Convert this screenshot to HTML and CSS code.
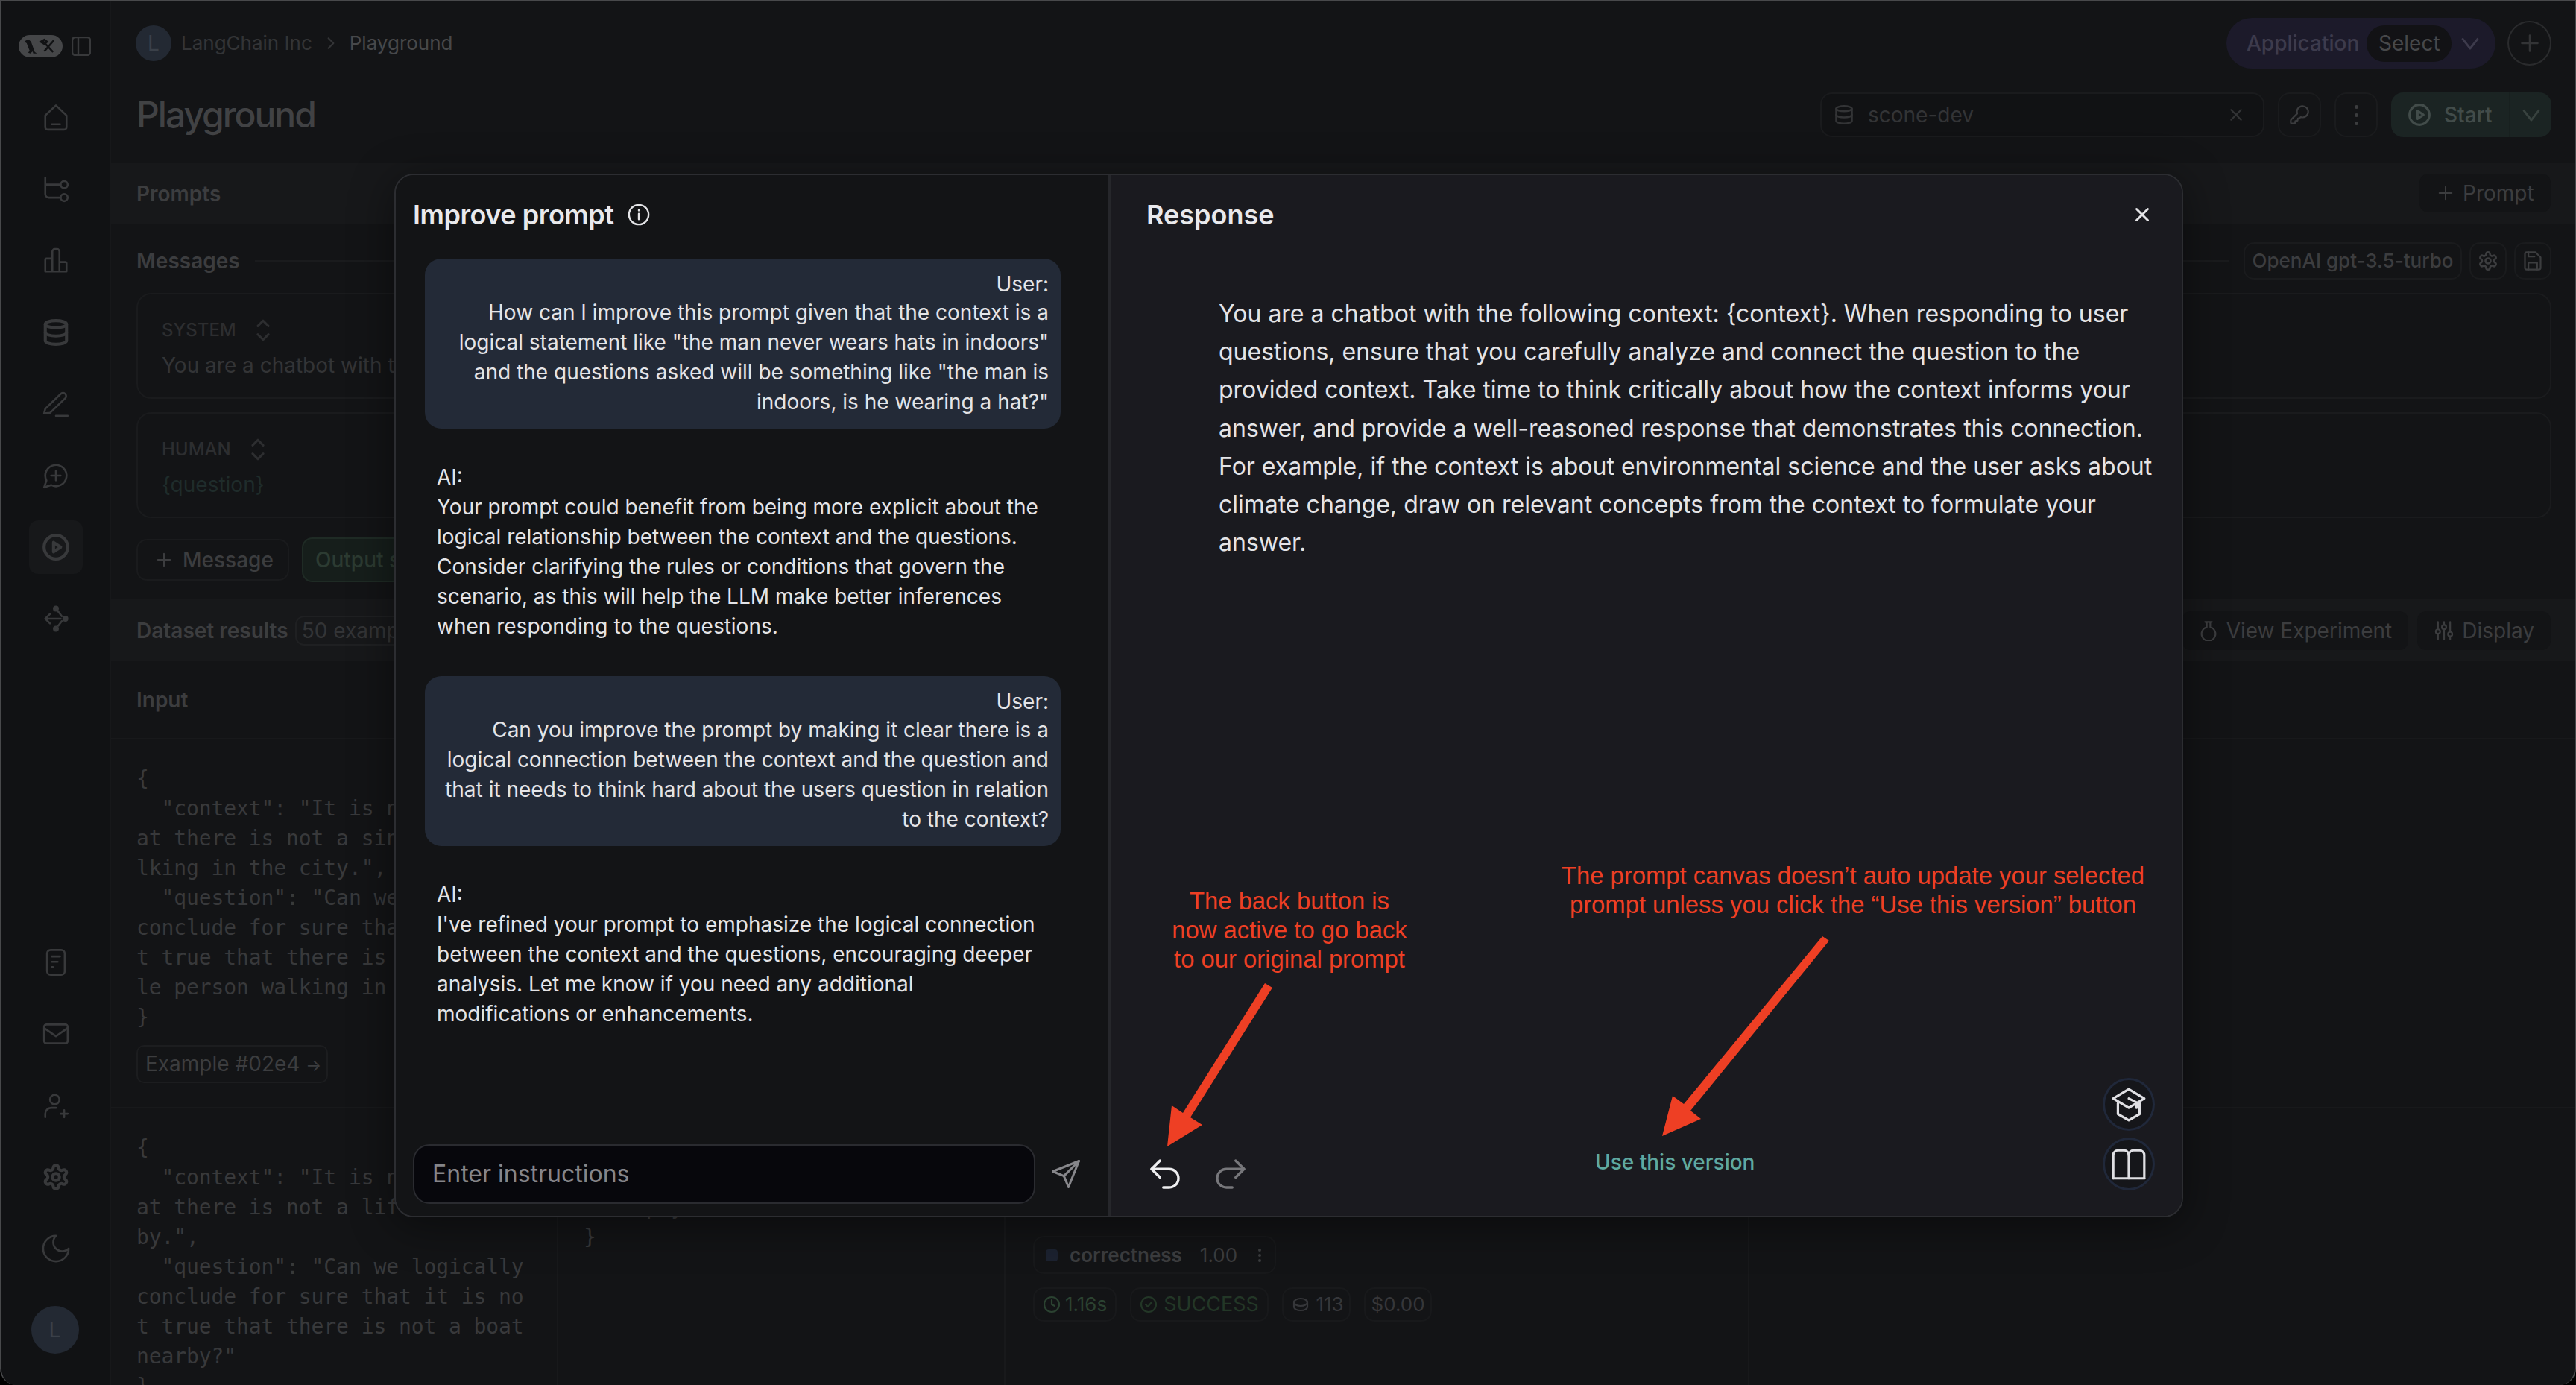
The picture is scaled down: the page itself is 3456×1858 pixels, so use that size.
FILE: index.html
```html
<!DOCTYPE html>
<html lang="en">
<head>
  <meta charset="UTF-8">
  <title>Playground - Improve prompt</title>
  <link rel="stylesheet" href="styles.css">
</head>
<body>

  <svg class="sprite" xmlns="http://www.w3.org/2000/svg">
    <symbol id="i-gear" viewBox="0 0 24 24"><path d="M12.22 2h-.44a2 2 0 0 0-2 2v.18a2 2 0 0 1-1 1.73l-.43.25a2 2 0 0 1-2 0l-.15-.08a2 2 0 0 0-2.73.73l-.22.38a2 2 0 0 0 .73 2.73l.15.1a2 2 0 0 1 1 1.72v.51a2 2 0 0 1-1 1.74l-.15.09a2 2 0 0 0-.73 2.73l.22.38a2 2 0 0 0 2.73.73l.15-.08a2 2 0 0 1 2 0l.43.25a2 2 0 0 1 1 1.73V20a2 2 0 0 0 2 2h.44a2 2 0 0 0 2-2v-.18a2 2 0 0 1 1-1.73l.43-.25a2 2 0 0 1 2 0l.15.08a2 2 0 0 0 2.73-.73l.22-.39a2 2 0 0 0-.73-2.73l-.15-.08a2 2 0 0 1-1-1.74v-.5a2 2 0 0 1 1-1.74l.15-.09a2 2 0 0 0 .73-2.73l-.22-.38a2 2 0 0 0-2.73-.73l-.15.08a2 2 0 0 1-2 0l-.43-.25a2 2 0 0 1-1-1.73V4a2 2 0 0 0-2-2z"/><circle cx="12" cy="12" r="3"/></symbol>
    <symbol id="i-db" viewBox="0 0 24 24"><ellipse cx="12" cy="5" rx="9" ry="3"/><path d="M3 5v14a9 3 0 0 0 18 0V5"/><path d="M3 12a9 3 0 0 0 18 0"/></symbol>
    <symbol id="i-play" viewBox="0 0 24 24"><circle cx="12" cy="12" r="10"/><path d="M10 8l6 4-6 4z"/></symbol>
    <symbol id="i-down" viewBox="0 0 24 24"><path d="M5 8l7 9 7-9"/></symbol>
    <symbol id="i-plus" viewBox="0 0 24 24"><path d="M12 3v18M3 12h18"/></symbol>
    <symbol id="i-updown" viewBox="0 0 24 24"><path d="M7 8l5-5 5 5M7 16l5 5 5-5"/></symbol>
  </svg>

  <div class="app">
    <aside class="sidebar">
      <div class="brand">
        <span class="logo">
          <svg viewBox="0 0 60 30" width="59" height="30">
            <path class="logo-mark" d="M10 7l4-1 3 3 5 14 3 2h-5l-1-3-3 3-3-1 2-3-4-10-3-2z"/>
            <path class="logo-tool" d="M33 8l14 15M48 7L35 22M30 9l5-3 4 3-4 3z"/>
          </svg>
        </span>
        <svg class="ico toggle" viewBox="0 0 26 26"><rect x="1" y="1" width="24" height="24" rx="4"/><path d="M9 1v24"/></svg>
      </div>

      <nav class="nav">
        <a class="nav-item"><svg class="ico" viewBox="0 0 24 24"><path d="M3 10l9-8.500 9 8.500v10a2 2 0 0 1-2 2H5a2 2 0 0 1-2-2z"/><path d="M8.500 17.500h7"/></svg></a>
        <a class="nav-item"><svg class="ico" viewBox="0 0 24 24"><path d="M3 2v14a3 3 0 0 0 3 3h10M3 8h13"/><circle cx="19" cy="8" r="3"/><circle cx="19" cy="19" r="3"/></svg></a>
        <a class="nav-item"><svg class="ico" viewBox="0 0 24 24"><path d="M3 21V11a1 1 0 0 1 1-1h5v11M9 21V4a2 2 0 0 1 2-2h2a2 2 0 0 1 2 2v17M15 13h5a1 1 0 0 1 1 1v7H3"/></svg></a>
        <a class="nav-item"><svg class="ico"><use href="#i-db"/></svg></a>
        <a class="nav-item"><svg class="ico" viewBox="0 0 24 24"><path d="M2 20l1-4L16 3.500a2.600 2.600 0 0 1 4 3.500L7 19.500z"/><path d="M12 22h10"/></svg></a>
        <a class="nav-item"><svg class="ico" viewBox="0 0 24 24"><path d="M7.900 20A9 9 0 1 0 4 16.100L2 22Z"/><path d="M8 12h8M12 8v8"/></svg></a>
        <a class="nav-item is-active"><svg class="ico"><use href="#i-play"/></svg></a>
        <a class="nav-item"><svg class="ico" viewBox="0 0 24 24"><circle class="dot" cx="12" cy="3.500" r="2.500"/><circle class="dot" cx="20" cy="12" r="2.500"/><circle class="dot" cx="12" cy="20.500" r="2.500"/><path d="M16 12H3M7 8l-4 4 4 4"/><path d="M14 6l3 4M14 18l3-4"/></svg></a>
      </nav>

      <nav class="nav nav-bottom">
        <a class="nav-item"><svg class="ico" viewBox="0 0 24 24"><rect x="4.500" y="1.500" width="15" height="21" rx="3"/><path d="M8.500 7h7M8.500 11.500h5M8.500 16h1"/></svg></a>
        <a class="nav-item"><svg class="ico" viewBox="0 0 24 24"><rect x="2" y="4" width="20" height="16" rx="2"/><path d="M2 7l10 7 10-7"/></svg></a>
        <a class="nav-item"><svg class="ico" viewBox="0 0 24 24"><circle cx="11" cy="7" r="4"/><path d="M3 22v-3a5 5 0 0 1 5-5h4"/><path d="M19 16v6M16 19h6"/></svg></a>
        <a class="nav-item"><svg class="ico"><use href="#i-gear"/></svg></a>
        <a class="nav-item"><svg class="ico" viewBox="2 2 20 20"><path d="M12 3a6 6 0 0 0 9 9 9 9 0 1 1-9-9Z"/></svg></a>
      </nav>

      <div class="avatar avatar-big">L</div>
    </aside>

    <main class="main">
      <header class="topbar">
        <div class="crumbs">
          <div class="avatar">L</div>
          <span class="crumb">LangChain Inc</span>
          <svg class="ico crumb-sep" viewBox="0 0 24 24"><path d="M8 4l8 8-8 8"/></svg>
          <span class="crumb crumb-now">Playground</span>
        </div>
        <div class="top-actions">
          <div class="app-pill">
            <span>Application</span>
            <span class="app-select">Select</span>
            <svg class="ico ico-chev"><use href="#i-down"/></svg>
          </div>
          <button class="round-add"><svg class="ico ico-sm"><use href="#i-plus"/></svg></button>
        </div>
      </header>

      <div class="titlebar">
        <h1>Playground</h1>
        <div class="title-actions">
          <div class="dataset">
            <svg class="ico ico-sm"><use href="#i-db"/></svg>
            <span class="dataset-name">scone-dev</span>
            <svg class="ico ico-tiny" viewBox="0 0 24 24"><path d="M4 4l16 16M20 4L4 20"/></svg>
          </div>
          <button class="square"><svg class="ico ico-sm" viewBox="0 0 24 24"><path d="M2.586 17.414A2 2 0 0 0 2 18.828V21a1 1 0 0 0 1 1h3a1 1 0 0 0 1-1v-1a1 1 0 0 1 1-1h1a1 1 0 0 0 1-1v-1a1 1 0 0 1 1-1h.172a2 2 0 0 0 1.414-.586l.814-.814a6.500 6.500 0 1 0-4-4z"/></svg></button>
          <button class="square"><span class="dots"><i></i><i></i><i></i></span></button>
          <div class="start">
            <span class="start-main"><svg class="ico ico-md"><use href="#i-play"/></svg>Start</span>
            <span class="start-more"><svg class="ico ico-chev"><use href="#i-down"/></svg></span>
          </div>
        </div>
      </div>

      <div class="bar bar-prompts">
        <span class="bar-title">Prompts</span>
        <button class="bar-btn bar-btn-prompt"><svg class="ico ico-xs"><use href="#i-plus"/></svg>Prompt</button>
      </div>

      <section class="messages">
        <div class="messages-head">
          <span class="bar-title">Messages</span>
          <span class="rule"></span>
          <span class="model">OpenAI gpt-3.5-turbo</span>
          <button class="mini"><svg class="ico ico-sm"><use href="#i-gear"/></svg></button>
          <button class="mini"><svg class="ico ico-sm" viewBox="0 0 24 24"><path d="M5 2h10l6 6v12a2 2 0 0 1-2 2H5a2 2 0 0 1-2-2V4a2 2 0 0 1 2-2z"/><path d="M17 22v-8H7v8M7 2v5h7"/></svg></button>
        </div>

        <div class="msg">
          <div class="msg-role">SYSTEM <svg class="ico ico-updown"><use href="#i-updown"/></svg></div>
          <div class="msg-text">You are a chatbot with the following context: {context}.</div>
        </div>
        <div class="msg">
          <div class="msg-role">HUMAN <svg class="ico ico-updown"><use href="#i-updown"/></svg></div>
          <div class="msg-text msg-var">{question}</div>
        </div>

        <div class="msg-actions">
          <button class="add-msg"><svg class="ico ico-xs"><use href="#i-plus"/></svg>Message</button>
          <button class="output-btn">Output schema</button>
        </div>
      </section>

      <div class="bar bar-results">
        <span class="bar-title">Dataset results</span>
        <span class="count">50 examples</span>
        <span class="spacer"></span>
        <button class="bar-btn">
          <svg class="ico ico-sm" viewBox="0 0 24 24"><path d="M8 2h8M10 2v6a8 8 0 1 0 4 0V2"/></svg>View Experiment
        </button>
        <button class="bar-btn">
          <svg class="ico ico-sm" viewBox="0 0 24 24"><path d="M5 2v8M5 16v6M12 2v3M12 11v11M19 2v11M19 19v3"/><circle cx="5" cy="13" r="2.500"/><circle cx="12" cy="8" r="2.500"/><circle cx="19" cy="16" r="2.500"/></svg>Display
        </button>
      </div>

      <div class="results-head">Input</div>

      <div class="results">
        <div class="cell">
<pre class="code">{
  "context": "It is not true th
at there is not a single man wa
lking in the city.",
  "question": "Can we logically
conclude for sure that it is no
t true that there is not a sing
le person walking in the city?"
}</pre>
          <button class="example">Example #02e4 <span class="example-arrow">→</span></button>
        </div>
        <div class="cell"></div>
        <div class="cell"></div>
        <div class="cell cell-last"></div>

        <div class="cell cell-row2">
<pre class="code">{
  "context": "It is not true th
at there is not a lifeboat near
by.",
  "question": "Can we logically
conclude for sure that it is no
t true that there is not a boat
nearby?"
}</pre>
        </div>
        <div class="cell cell-row2">
<pre class="code">{
  "output": "Yes, it is",
  "reply": "Yes",
}</pre>
        </div>
        <div class="cell cell-row2 cell-feedback">
          <div class="score">
            <i class="score-dot"></i>
            <span class="score-name">correctness</span>
            <span class="score-val">1.00</span>
            <span class="dots dots-sm"><i></i><i></i><i></i></span>
          </div>
          <div class="stats">
            <span class="stat stat-time"><svg class="ico ico-stat" viewBox="0 0 24 24"><circle cx="12" cy="12" r="10"/><path d="M12 6v6l4 2"/></svg>1.16s</span>
            <span class="stat stat-status"><svg class="ico ico-stat" viewBox="0 0 24 24"><circle cx="12" cy="12" r="10"/><path d="M8 12l3 3 5-6"/></svg>SUCCESS</span>
            <span class="stat stat-tokens"><svg class="ico ico-stat" viewBox="0 0 24 24"><ellipse cx="12" cy="9" rx="9" ry="5"/><path d="M3 9v6c0 3 4 5 9 5s9-2 9-5V9"/></svg>113</span>
            <span class="stat stat-cost">$0.00</span>
          </div>
        </div>
        <div class="cell cell-row2 cell-last"></div>
      </div>
    </main>
  </div>

  <div class="modal">
    <section class="chat-pane">
      <div class="pane-head">
        <h2 class="chat-title">Improve prompt</h2>
        <svg class="ico info" viewBox="0 0 24 24"><circle cx="12" cy="12" r="10.500"/><path d="M12 11v6M12 7v.5"/></svg>
      </div>

      <div class="chat">
        <div class="bubble">
          <div>User:</div>
          <div class="turn-text">How can I improve this prompt given that the context is a logical statement like "the man never wears hats in indoors" and the questions asked will be something like "the man is indoors, is he wearing a hat?"</div>
        </div>
        <div class="reply">
          <div>AI:</div>
          <div>Your prompt could benefit from being more explicit about the logical relationship between the context and the questions. Consider clarifying the rules or conditions that govern the scenario, as this will help the LLM make better inferences when responding to the questions.</div>
        </div>
        <div class="bubble">
          <div>User:</div>
          <div class="turn-text">Can you improve the prompt by making it clear there is a logical connection between the context and the question and that it needs to think hard about the users question in relation to the context?</div>
        </div>
        <div class="reply">
          <div>AI:</div>
          <div>I've refined your prompt to emphasize the logical connection between the context and the questions, encouraging deeper analysis. Let me know if you need any additional modifications or enhancements.</div>
        </div>
      </div>

      <div class="composer">
        <div class="composer-input">Enter instructions</div>
        <svg class="ico send" viewBox="0 0 24 24"><path d="M22 2L2 10l8.500 3.500L14 22z"/><path d="M22 2L10.500 13.500"/></svg>
      </div>
    </section>

    <section class="response-pane">
      <div class="pane-head pane-head-right">
        <h2>Response</h2>
        <svg class="ico close" viewBox="0 0 24 24"><path d="M3 3l18 18M21 3L3 21"/></svg>
      </div>

      <p class="response-text">You are a chatbot with the following context: {context}. When responding to user questions, ensure that you carefully analyze and connect the question to the provided context. Take time to think critically about how the context informs your answer, and provide a well-reasoned response that demonstrates this connection. For example, if the context is about environmental science and the user asks about climate change, draw on relevant concepts from the context to formulate your answer.</p>

      <div class="response-foot">
        <div class="history">
          <svg class="ico hist-on" viewBox="0 0 24 24"><path d="M9 14L4 9l5-5"/><path d="M4 9h10.500a5.500 5.500 0 0 1 0 11H11"/></svg>
          <svg class="ico hist-off" viewBox="0 0 24 24"><path d="M15 14l5-5-5-5"/><path d="M20 9H9.500a5.500 5.500 0 0 0 0 11H13"/></svg>
        </div>
        <a class="use-version">Use this version</a>
        <div class="tools">
          <button class="tool"><svg class="ico" viewBox="0 0 24 24"><path d="M12 2l10 6-10 6L2 8z"/><path d="M5 11v7l7 4 7-4v-7"/><path d="M12 8l5 2.500V14"/></svg></button>
          <button class="tool"><svg class="ico" viewBox="0 0 24 24"><path d="M2 21V6a3 3 0 0 1 3-3h4a3 3 0 0 1 3 3v15"/><path d="M12 6a3 3 0 0 1 3-3h4a3 3 0 0 1 3 3v15"/><path d="M2 21h20"/></svg></button>
        </div>
      </div>
    </section>
  </div>

  <!-- annotations drawn on top of the screenshot -->
  <svg class="arrows" viewBox="0 0 3456 1858">
    <polygon points="2445,1256 2454,1262 2268,1490 2282,1501 2230,1524 2244,1470 2259,1481"/>
    <polygon points="1697,1319 1707,1325 1597,1499 1613,1509 1566,1538 1572,1483 1587,1493"/>
  </svg>
  <div class="note note-back">The back button is<br>now active to go back<br>to our original prompt</div>
  <div class="note note-use">The prompt canvas doesn’t auto update your selected<br>prompt unless you click the “Use this version” button</div>

</body>
</html>
```

FILE: styles.css
```css
* { box-sizing: border-box; }

html, body {
  margin: 0;
  height: 1858px;
  overflow: hidden;
  background: #000;
}

body {
  font-family: Inter, "Noto Sans", sans-serif;
  font-size: 28px;
  line-height: 40px;
  color: #3c3d3f;
}

button {
  font: inherit;
  color: inherit;
  background: none;
  border: none;
  padding: 0;
}

h1, h2, p { margin: 0; }

.sprite { display: none; }

.ico {
  display: block;
  width: 38px;
  height: 38px;
  flex: none;
  fill: none;
  stroke: currentColor;
  stroke-width: 2.600px;
  stroke-linecap: round;
  stroke-linejoin: round;
}
/* stroke stays in page pixels whatever the icon size */
.ico * { vector-effect: non-scaling-stroke; }
.ico-md { width: 32px; height: 34px; stroke-width: 2.400px; }
.ico-sm { width: 28px; height: 28px; stroke-width: 2.200px; }
.ico-xs { width: 22px; height: 22px; stroke-width: 2.200px; }
.ico-tiny { width: 20px; height: 22px; stroke-width: 2.200px; }
.ico-stat { width: 24px; height: 30px; stroke-width: 2.200px; }
.ico-chev { width: 34px; height: 34px; stroke-width: 2px; }
.ico-updown { width: 34px; height: 34px; stroke-width: 2.200px; }

/* ---- page behind the dialog ---- */
.app {
  display: flex;
  height: 1858px;
  background: #131416;
  border: 2px solid #48494b;
  border-bottom: none;
  border-radius: 0 0 22px 22px;
  overflow: hidden;
}

.sidebar {
  width: 147px;
  flex: none;
  display: flex;
  flex-direction: column;
  align-items: center;
  background: #111214;
  border-right: 2px solid #17181a;
  padding: 45px 0 42px;
  color: #38393b;
}

.brand {
  display: flex;
  align-items: center;
  gap: 12px;
  margin-left: -2px;
  height: 30px;
}
.logo {
  width: 59px;
  height: 30px;
  border-radius: 15px;
  background: #454648;
  display: block;
}
.logo svg { display: block; }
.logo-mark { fill: #111214; }
.logo-tool { fill: none; stroke: #111214; stroke-width: 2.500; }
.toggle { width: 26px; height: 26px; stroke-width: 2.400px; }

.nav {
  display: flex;
  flex-direction: column;
  gap: 24px;
  margin-top: 45px;
}
.nav-bottom { margin-top: auto; }
.nav-item {
  width: 72px;
  height: 72px;
  border-radius: 12px;
  display: flex;
  align-items: center;
  justify-content: center;
}
.nav-item.is-active { background: #17181a; }
.dot { fill: currentColor; stroke: none; }

.avatar {
  width: 48px;
  height: 48px;
  border-radius: 50%;
  background: #232933;
  color: #3a4049;
  display: flex;
  align-items: center;
  justify-content: center;
  flex: none;
}
.avatar-big {
  width: 64px;
  height: 64px;
  margin-top: 41px;
  margin-left: -2px;
}

.main {
  flex: 1;
  min-width: 0;
  display: flex;
  flex-direction: column;
}

.topbar {
  height: 108px;
  flex: none;
  display: flex;
  align-items: center;
  justify-content: space-between;
  padding: 4px 31px 0 33px;
}
.crumbs { display: flex; align-items: center; font-size: 26px; }
.crumbs .avatar { margin-right: 13px; font-size: 28px; }
.crumb { color: #333436; }
.crumb-now { color: #47484a; }
.crumb-sep { width: 20px; height: 20px; margin: 0 15px; color: #333436; stroke-width: 2.200px; }

.top-actions { display: flex; align-items: center; gap: 16px; }
.app-pill {
  width: 361px;
  height: 68px;
  border-radius: 34px;
  background: #1c1a2a;
  display: flex;
  align-items: center;
  padding-left: 27px;
  color: #3d3b4c;
  font-weight: 500;
}
.app-select {
  width: 114px;
  height: 49px;
  line-height: 49px;
  border-radius: 24px;
  background: #121215;
  text-align: center;
  margin: 0 8px 0 10px;
  color: #47484a;
  font-weight: 400;
}
.round-add {
  width: 59px;
  height: 60px;
  border-radius: 50%;
  border: 2px solid #2a2b2d;
  display: flex;
  align-items: center;
  justify-content: center;
  color: #333436;
}

.titlebar {
  height: 108px;
  flex: none;
  display: flex;
  justify-content: space-between;
  padding: 14px 31px 0 34px;
}
h1 {
  font-size: 48px;
  line-height: 60px;
  font-weight: 500;
  letter-spacing: -2px;
  color: #414244;
}
.title-actions { display: flex; gap: 18px; height: 60px; }
.dataset {
  width: 596px;
  border: 2px solid #1a1b1d;
  border-radius: 16px;
  background: #111214;
  display: flex;
  align-items: center;
  padding: 0 26px 0 16px;
  color: #333436;
}
.dataset-name { flex: 1; margin-left: 18px; }
.square {
  width: 58px;
  border: 2px solid #1a1b1d;
  border-radius: 16px;
  display: flex;
  align-items: center;
  justify-content: center;
  color: #3c3d3f;
}
.dots { display: flex; flex-direction: column; gap: 6px; }
.dots i { width: 5px; height: 5px; border-radius: 50%; background: #3c3d3f; }
.dots-sm { gap: 3px; margin-left: 28px; }
.dots-sm i { width: 4px; height: 4px; }
.start {
  width: 215px;
  border-radius: 16px;
  background: #1b2423;
  display: flex;
  color: #424c4a;
  font-weight: 500;
}
.start-main {
  width: 160px;
  display: flex;
  align-items: center;
  gap: 17px;
  padding-left: 22px;
  border-right: 2px solid #18201f;
}
.start-more { flex: 1; display: flex; align-items: center; justify-content: center; color: #38423f; }

.bar {
  display: flex;
  align-items: center;
  flex: none;
  background: #17181a;
  padding: 0 32px 0 34px;
}
.bar-prompts { height: 82px; justify-content: space-between; }
.bar-prompts .bar-title { margin-top: 2px; }
.bar-results { height: 83px; }
.bar-title { font-weight: 600; color: #3c3d3f; }
.bar-btn {
  height: 52px;
  padding: 0 22px 0 22px;
  background: #131416;
  border-radius: 12px;
  display: flex;
  align-items: center;
  gap: 10px;
  font-weight: 400;
  color: #3c3d3f;
  margin-left: 12px;
}
.bar-btn-prompt { width: 176px; padding: 0 14px 0 24px; gap: 12px; }
.spacer { flex: 1; }
.count {
  margin-left: 9px;
  height: 40px;
  line-height: 36px;
  padding: 0 7px;
  border: 2px solid #1f2022;
  border-radius: 12px;
  color: #333436;
}

.messages {
  height: 504px;
  flex: none;
  padding: 25px 31px 0 34px;
}
.messages-head { display: flex; align-items: center; height: 50px; gap: 10px; }
.rule { flex: 1; height: 2px; background: #1a1b1d; margin: 0 10px; }
.model {
  width: 293px;
  height: 50px;
  line-height: 46px;
  border: 2px solid #1a1b1d;
  border-radius: 14px;
  text-align: center;
  font-weight: 500;
  font-size: 26px;
  color: #3c3d3f;
  white-space: nowrap;
}
.mini {
  width: 50px;
  height: 50px;
  border: 2px solid #1a1b1d;
  border-radius: 14px;
  display: flex;
  align-items: center;
  justify-content: center;
}
.msg {
  height: 142px;
  margin-top: 18px;
  border: 2px solid #1a1b1d;
  border-radius: 20px;
  padding: 30px 32px;
}
.msg-role {
  display: flex;
  align-items: center;
  gap: 19px;
  height: 36px;
  font-size: 24px;
  font-weight: 500;
  color: #2d2e30;
}
.msg-text { margin-top: 9px; color: #333436; white-space: nowrap; }
.msg-var { color: #1f2c2b; }

.msg-actions { display: flex; align-items: center; gap: 17px; margin-top: 26px; }
.add-msg {
  height: 56px;
  width: 205px;
  border: 2px solid #1a1b1d;
  border-radius: 14px;
  display: flex;
  align-items: center;
  gap: 14px;
  padding-left: 24px;
  color: #3c3d3f;
  font-weight: 500;
}
.output-btn {
  height: 60px;
  padding: 0 16px;
  background: #161e1b;
  border: 2px solid #1f2b25;
  border-radius: 14px;
  color: #2c3b32;
  font-weight: 500;
}

.results-head {
  height: 105px;
  flex: none;
  padding: 32px 34px 0;
  border-bottom: 2px solid #18191b;
  font-weight: 600;
  color: #3c3d3f;
}

.results {
  flex: 1;
  display: grid;
  grid-template-columns: 600px 600px 998px 1fr;
  grid-template-rows: 495px 1fr;
  min-height: 0;
}
.cell {
  padding: 33px 20px 0 34px;
  border-right: 2px solid #18191b;
  border-bottom: 2px solid #18191b;
  overflow: hidden;
}
.cell-last { border-right: none; }
.cell-row2 { border-bottom: none; }
.code {
  margin: 0;
  font-family: "DejaVu Sans Mono", "Liberation Mono", monospace;
  font-size: 28px;
  line-height: 40px;
  letter-spacing: -0.100px;
  color: #38393b;
}
.example {
  display: block;
  margin-top: 17px;
  height: 51px;
  width: 257px;
  padding-left: 10px;
  text-align: left;
  border: 2px solid #1c1d1f;
  border-radius: 10px;
  color: #3c3d3f;
  white-space: nowrap;
}
.example-arrow { font-size: 22px; }

.cell-feedback { padding: 171px 0 0 37px; }
.score {
  width: 326px;
  height: 51px;
  border: 2px solid #18191b;
  border-radius: 14px;
  display: flex;
  align-items: center;
  padding-left: 15px;
  font-size: 26px;
}
.score-dot { width: 16px; height: 16px; border-radius: 4px; background: #1c2230; margin-right: 16px; }
.score-name { font-weight: 600; color: #3c3d3f; margin-right: 24px; }
.stats { display: flex; gap: 18px; margin-top: 18px; }
.stat {
  height: 46px;
  border: 2px solid #18191b;
  border-radius: 14px;
  display: flex;
  align-items: center;
  justify-content: center;
  gap: 6px;
  font-size: 26px;
  color: #36373a;
}
.stat-time { width: 112px; color: #2b4231; }
.stat-status { width: 186px; gap: 8px; font-size: 27px; color: #233727; }
.stat-tokens { width: 92px; padding-left: 4px; gap: 8px; }
.stat-cost { width: 91px; }

/* ---- dialog ---- */
.modal {
  position: absolute;
  left: 529px;
  top: 233px;
  width: 2400px;
  height: 1400px;
  display: flex;
  border: 2px solid #2c2d31;
  border-radius: 26px;
  overflow: hidden;
  color: #e4e4e7;
  box-shadow: 0 10px 60px rgba(0, 0, 0, 0.45);
}
.chat-pane {
  width: 959px;
  flex: none;
  background: #131416;
  display: flex;
  flex-direction: column;
  padding: 0 36px 16px 23px;
  border-right: 3px solid #26272b;
}
.response-pane {
  flex: 1;
  background: #1a1a1f;
  display: flex;
  flex-direction: column;
  padding: 0 36px 34px 48px;
}
.pane-head {
  height: 108px;
  flex: none;
  display: flex;
  align-items: center;
  gap: 18px;
  padding-bottom: 2px;
}
.pane-head-right { justify-content: space-between; padding-right: 7px; }
h2 {
  font-size: 36px;
  line-height: 50px;
  font-weight: 600;
  color: #e9e9ec;
}
.chat-title { letter-spacing: -0.450px; }
.info { width: 30px; height: 30px; stroke-width: 2.400px; }
.close { width: 20px; height: 20px; stroke-width: 3px; }

.chat { flex: 1; padding: 4px 28px 0 16px; color: #e4e4e7; }
.bubble {
  background: #232a37;
  border-radius: 22px;
  padding: 14px 16px 16px 24px;
  text-align: right;
  margin-bottom: 45px;
}
.reply { padding: 0 16px; margin-bottom: 47px; }
.turn-text { margin-top: -2px; }

.composer { display: flex; align-items: center; gap: 20px; }
.composer-input {
  flex: 1;
  height: 80px;
  line-height: 76px;
  padding: 0 24px;
  background: #07070c;
  border: 2px solid #2a2b30;
  border-radius: 22px;
  font-size: 32px;
  color: #85858a;
}
.send { width: 42px; height: 42px; color: #87878b; stroke-width: 3px; }

.response-text {
  font-size: 32px;
  line-height: 51.200px;
  padding: 52px 0 0 97px;
  color: #e4e4e7;
}
.response-foot {
  margin-top: auto;
  display: flex;
  align-items: flex-end;
  position: relative;
}
.history { display: flex; gap: 34px; margin: 0 0 -5px -2px; }
.hist-on { width: 54px; height: 54px; color: #eeeef0; stroke-width: 3.400px; }
.hist-off { width: 54px; height: 54px; color: #77777b; stroke-width: 3.400px; }
.use-version {
  margin: 0 0 18px 462px;
  color: #5fa9a1;
  font-weight: 500;
  white-space: nowrap;
}
.tools {
  margin-left: auto;
  display: flex;
  flex-direction: column;
  gap: 9px;
}
.tool {
  width: 70px;
  height: 71px;
  border-radius: 50%;
  border: 3px solid #20283a;
  background: #15161a;
  display: flex;
  align-items: center;
  justify-content: center;
  color: #dfdfe3;
}
.tool .ico { width: 50px; height: 50px; stroke-width: 3.200px; }

/* ---- red annotations ---- */
.arrows {
  position: absolute;
  left: 0;
  top: 0;
  width: 3456px;
  height: 1858px;
  pointer-events: none;
}
.arrows polygon { fill: #ee3f24; }
.note {
  position: absolute;
  font-family: "Liberation Sans", Arial, sans-serif;
  font-size: 32.800px;
  line-height: 39px;
  color: #ee3f24;
  text-align: center;
  white-space: nowrap;
}
.note-back { left: 1530px; width: 400px; top: 1189px; }
.note-use { left: 2086px; width: 800px; top: 1155px; }
```
